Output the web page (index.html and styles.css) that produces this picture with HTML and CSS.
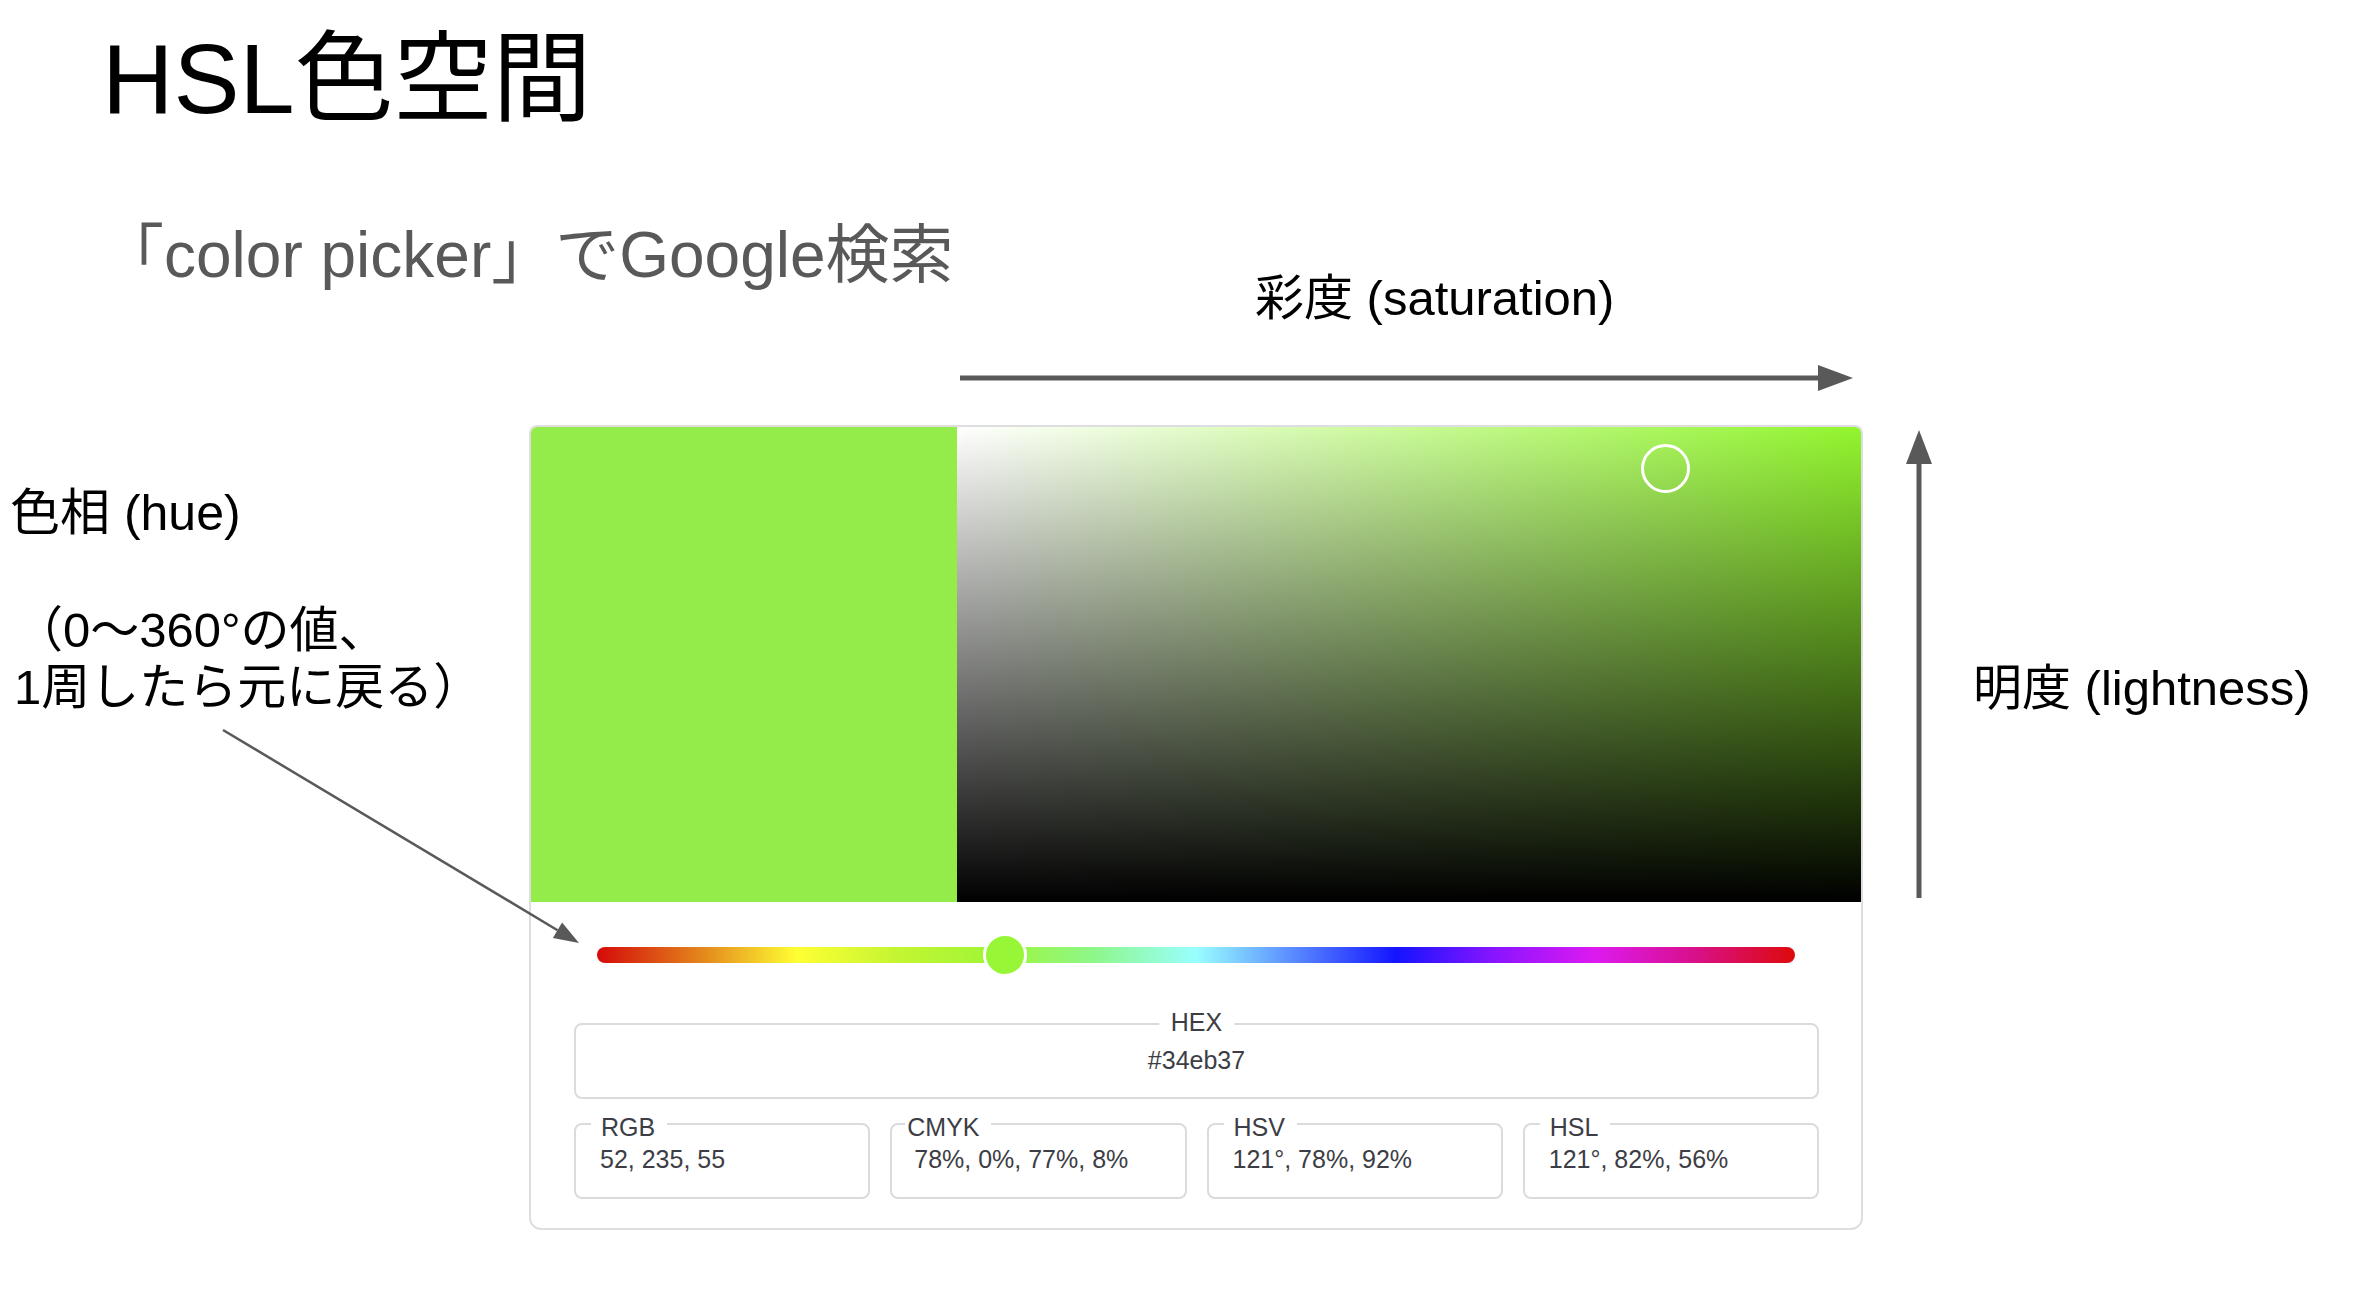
FILE: index.html
```html
<!DOCTYPE html>
<html lang="ja">
<head>
<meta charset="utf-8">
<title>HSL色空間</title>
<link rel="stylesheet" href="styles.css">
</head>
<body>
<div class="slide">
  <h1 class="title">HSL色空間</h1>
  <div class="band">
    <p class="subtitle">「color picker」でGoogle検索</p>
    <div class="sat">
      <div class="sat-label">彩度 (saturation)</div>
      <svg class="sat-arrow" width="893" height="26" viewBox="0 0 893 26">
        <rect x="0" y="10.5" width="860" height="5" fill="#595959"/>
        <polygon points="858,0 893,13 858,26" fill="#595959"/>
      </svg>
    </div>
  </div>
  <div class="stage">
    <div class="hue-notes">
      <div class="hue-label">色相 (hue)</div>
      <div class="hue-note">（0〜360°の値、<br>1周したら元に戻る）</div>
    </div>
    <div class="picker">
      <div class="color-row">
        <div class="swatch"></div>
        <div class="sv">
          <div class="sv-marker"></div>
        </div>
      </div>
      <div class="slider-wrap">
        <div class="hue-track">
          <div class="hue-thumb"></div>
        </div>
      </div>
      <div class="fields">
        <div class="field field-hex">
          <span class="field-label field-label-hex">HEX</span>
          <span class="field-value-hex">#34eb37</span>
        </div>
        <div class="field-row">
          <div class="field">
            <span class="field-label">RGB</span>
            <div class="field-value">52, 235, 55</div>
          </div>
          <div class="field">
            <span class="field-label field-label-tight">CMYK</span>
            <div class="field-value field-value-tight">78%, 0%, 77%, 8%</div>
          </div>
          <div class="field">
            <span class="field-label">HSV</span>
            <div class="field-value">121°, 78%, 92%</div>
          </div>
          <div class="field">
            <span class="field-label">HSL</span>
            <div class="field-value">121°, 82%, 56%</div>
          </div>
        </div>
      </div>
    </div>
    <div class="light">
      <svg class="light-arrow" width="26" height="468" viewBox="0 0 26 468">
        <polygon points="13,0 26,34 0,34" fill="#595959"/>
        <rect x="10.5" y="32" width="5" height="436" fill="#595959"/>
      </svg>
      <div class="light-label">明度 (lightness)</div>
    </div>
    <svg class="hue-arrow" width="600" height="540" viewBox="0 0 600 540">
      <line x1="223" y1="305" x2="557.5" y2="505.2" stroke="#595959" stroke-width="2.5"/>
      <polygon points="579,518 552.9,512.9 562.1,497.5" fill="#595959"/>
    </svg>
  </div>
</div>
</body>
</html>
```

FILE: styles.css
```css
* {
  box-sizing: border-box;
}

html, body {
  margin: 0;
  padding: 0;
  background: #ffffff;
}

body {
  font-family: "Liberation Sans", "Noto Sans CJK JP", sans-serif;
  color: #000000;
}

.slide {
  width: 2360px;
  height: 1290px;
  padding-top: 30px;
  overflow: hidden;
}

.title {
  margin: 0;
  padding-left: 102px;
  font-size: 99px;
  line-height: 98px;
  font-weight: normal;
  color: #000000;
}

.band {
  display: grid;
  grid-template-columns: 960px 893px;
  align-items: start;
}

.subtitle {
  margin: 95px 0 0 0;
  padding-left: 100px;
  font-size: 64px;
  line-height: 64px;
  color: #595959;
  white-space: nowrap;
}

.sat {
  padding-top: 146px;
  padding-bottom: 34px;
}

.sat-label {
  margin-left: 295px;
  font-size: 49px;
  line-height: 49px;
  white-space: nowrap;
}

.sat-arrow {
  display: block;
  margin-top: 42px;
}

.stage {
  position: relative;
  display: flex;
  align-items: flex-start;
}

.hue-notes {
  flex: none;
  width: 529px;
  padding-left: 10px;
  padding-top: 64px;
}

.hue-label {
  font-size: 50px;
  line-height: 49px;
  white-space: nowrap;
}

.hue-note {
  margin-top: 64px;
  margin-left: 4px;
  font-size: 49px;
  line-height: 57px;
  white-space: nowrap;
}

.picker {
  flex: none;
  width: 1334px;
  border: 2px solid #dedee2;
  border-radius: 8px 8px 12px 12px;
  overflow: hidden;
  background: #ffffff;
  color: #3d3d45;
}

.color-row {
  display: flex;
  height: 475px;
}

.swatch {
  flex: none;
  width: 426px;
  background: #94ec4a;
}

.sv {
  flex: 1;
  position: relative;
  background:
    linear-gradient(to bottom, rgba(0, 0, 0, 0), #000000),
    linear-gradient(to right, #ffffff, #92f52e);
}

.sv-marker {
  position: absolute;
  left: 684px;
  top: 17px;
  width: 49px;
  height: 49px;
  border: 3px solid #ffffff;
  border-radius: 50%;
}

.slider-wrap {
  padding: 45px 66px 0 66px;
}

.hue-track {
  position: relative;
  height: 16px;
  border-radius: 8px;
  background: linear-gradient(to right,
    #d40a0a 0%,
    #e48a1c 9%,
    #ffff33 16.7%,
    #c4f532 25%,
    #9ef636 33.3%,
    #8ef78a 41.5%,
    #99ffff 50%,
    #5a8cff 58%,
    #1414ff 66.7%,
    #8a14ff 75%,
    #dd1af0 83.3%,
    #d8108c 91.5%,
    #dd0a0a 100%);
}

.hue-thumb {
  position: absolute;
  left: 386px;
  top: -14px;
  width: 44px;
  height: 44px;
  border: 3px solid #ffffff;
  border-radius: 50%;
  background: #97f636;
}

.fields {
  padding: 60px 42px 29px 43px;
}

.field {
  position: relative;
  height: 76px;
  border: 2px solid #dadadf;
  border-radius: 8px;
  font-size: 25px;
  line-height: 24px;
}

.field-hex {
  display: flex;
  align-items: center;
  justify-content: center;
  padding-bottom: 3px;
}

.field-label {
  position: absolute;
  top: -10px;
  left: 15px;
  padding: 0 12px 0 10px;
  background: #ffffff;
  white-space: nowrap;
}

.field-label-hex {
  top: -15px;
  left: 50%;
  transform: translateX(-50%);
  padding: 0 12px;
}

.field-label-tight {
  left: 13px;
  padding: 0 12px 0 2px;
}

.field-value-hex {
  white-space: nowrap;
}

.field-row {
  display: grid;
  grid-template-columns: repeat(4, 1fr);
  gap: 20px;
  margin-top: 24px;
}

.field-value {
  padding: 22px 0 0 24px;
  white-space: nowrap;
}

.field-value-tight {
  padding-left: 22px;
}

.light {
  display: flex;
  align-items: flex-start;
  margin-left: 43px;
}

.light-arrow {
  display: block;
  flex: none;
  margin-top: 5px;
}

.light-label {
  margin-left: 41px;
  margin-top: 239px;
  font-size: 49px;
  line-height: 49px;
  white-space: nowrap;
}

.hue-arrow {
  position: absolute;
  left: 0;
  top: 0;
  pointer-events: none;
}
```
